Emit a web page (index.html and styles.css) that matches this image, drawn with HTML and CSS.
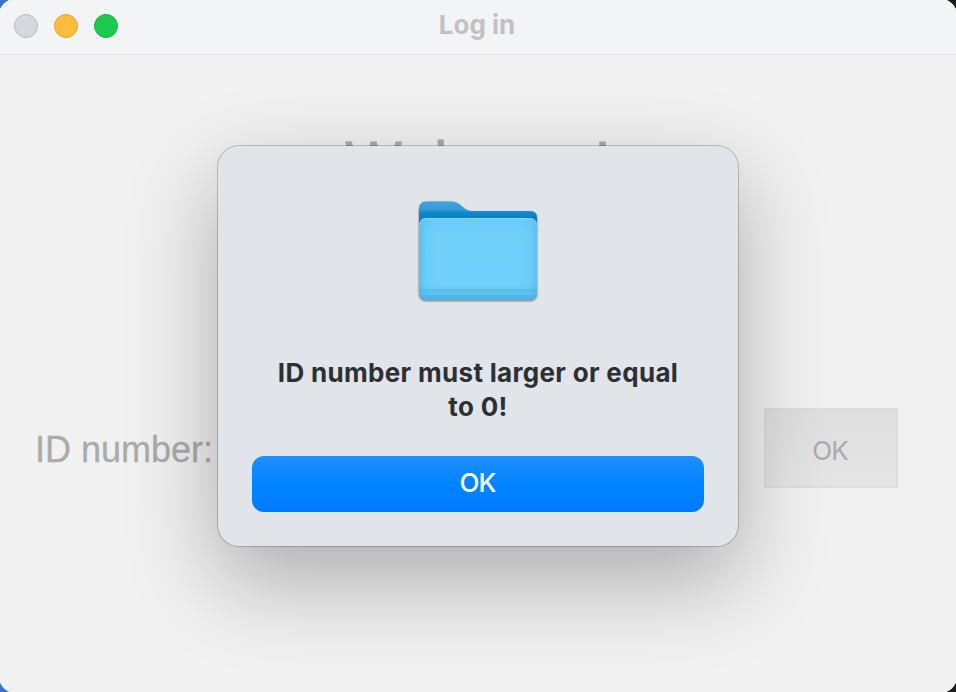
FILE: index.html
```
<!DOCTYPE html>
<html lang="en">
<head>
<meta charset="utf-8">
<title>Log in</title>
<link rel="stylesheet" href="styles.css">
</head>
<body>
<div class="window">
  <header class="titlebar">
    <div class="lights"><span class="light close"></span><span class="light minimize"></span><span class="light maximize"></span></div>
    <h1 class="title">Log in</h1>
  </header>
  <main class="content">
    <h2 class="welcome">Welcome!</h2>
    <div class="form">
      <label class="label">ID number:</label>
      <button class="submit" disabled>OK</button>
    </div>
  </main>
</div>
<div class="dialog" role="alertdialog">
  <svg class="folder" viewBox="0 0 128 108" width="128" height="108">
    <defs>
      <linearGradient id="back" x1="0" y1="0" x2="0" y2="1">
        <stop offset="0" stop-color="#43a4db"/><stop offset=".09" stop-color="#3498d3"/><stop offset=".13" stop-color="#0c86ca"/><stop offset=".22" stop-color="#087cc1"/><stop offset="1" stop-color="#087cc1"/>
      </linearGradient>
      <linearGradient id="front" x1="0" y1="0" x2="0" y2="1">
        <stop offset="0" stop-color="#6bcaf6"/><stop offset=".2" stop-color="#70d0fa"/><stop offset=".8" stop-color="#70d0fb"/><stop offset="1" stop-color="#5ec0ed"/>
      </linearGradient>
      <linearGradient id="edge">
        <stop offset="0" stop-color="#36a1d8" stop-opacity=".35"/><stop offset=".06" stop-color="#36a1d8" stop-opacity=".08"/><stop offset=".14" stop-color="#36a1d8" stop-opacity="0"/><stop offset=".86" stop-color="#36a1d8" stop-opacity="0"/><stop offset=".94" stop-color="#36a1d8" stop-opacity=".08"/><stop offset="1" stop-color="#36a1d8" stop-opacity=".35"/>
      </linearGradient>
    </defs>
    <path fill="url(#back)" d="M5 12Q5 3.500 12 3.500H38Q42 3.500 45 6L50 10Q53 13 58 13H116Q123 13 123 20V92H5Z"/>
    <path fill="url(#front)" d="M13 20H115Q123 20 123 28V94Q123 102 115 102H13Q5 102 5 94V28Q5 20 13 20Z"/>
    <path fill="url(#edge)" d="M13 20H115Q123 20 123 28V94Q123 102 115 102H13Q5 102 5 94V28Q5 20 13 20Z"/>
    <path d="M5.500 27Q6 20.500 13 20.500H115Q122 20.500 122.500 27" fill="none" stroke="#83d7fa"/>
    <path fill="#55b9e8" d="M5 91.500H123V93.500H5ZM5 94.500H123V95.500H5Z"/>
    <path fill="#4db5e8" d="M5.500 97H122.500Q121 102 115 102H13Q7 102 5.500 97Z"/>
  </svg>
  <p class="message">ID number must larger or equal<br>to 0!</p>
  <button class="confirm">OK</button>
</div>
</body>
</html>
```
FILE: styles.css
```
* { box-sizing: border-box; }
body {
  margin: 0;
  position: relative;
  width: 956px;
  height: 692px;
  overflow: hidden;
  background: linear-gradient(90deg, #3d72cc 50%, #1c1c1c 50%);
  font-family: Inter, "Liberation Sans", sans-serif;
}
.window {
  width: 960px;
  height: 696px;
  margin: -2px;
  overflow: hidden;
  border-radius: 20px;
  background: #f1f1f1;
}
.titlebar {
  display: grid;
  grid-template-columns: 1fr auto 1fr;
  align-items: center;
  height: 57px;
  padding: 0 18px 0 16px;
  border-bottom: 1px solid #e2e3e4;
  background: #f3f4f6;
}
.lights { display: flex; gap: 16px; }
.light { width: 24px; height: 24px; border: 1px solid #b8bbc0; border-radius: 50%; background: #d5d9de; }
.minimize { border-color: #e4a239; background: #ffbd3e; }
.maximize { border-color: #18b446; background: #1bc94e; }
.title { margin: 0; padding-bottom: 2px; color: #c1c1c1; font-size: 26px; line-height: 32px; font-weight: 700; letter-spacing: 0; }
.content { padding: 74px 60px 0 37px; font-family: "Liberation Sans", Arial, sans-serif; }
.welcome { margin: 0; color: #ababab; font-size: 60px; line-height: 68px; font-weight: 400; -webkit-text-stroke: 0.8px #ababab; text-align: center; padding-left: 23px; }
.form { display: flex; align-items: center; justify-content: space-between; margin-top: 211px; }
.label { color: #ababab; font-size: 36px; line-height: 42px; padding-top: 4px; -webkit-text-stroke: 0.3px #ababab; }
.submit {
  width: 134px;
  height: 80px;
  padding: 5px 2px 0 0;
  border: 2px solid #dedede;
  background: linear-gradient(#dfdfdf, #e5e5e5);
  color: #ababab;
  font: 26px Inter, sans-serif;
  letter-spacing: -1px;
}
.dialog {
  position: absolute;
  left: 218px;
  top: 146px;
  display: flex;
  flex-direction: column;
  align-items: center;
  width: 520px;
  height: 400px;
  padding: 52px 34px 34px;
  border-radius: 21px;
  background: #e1e4e9;
  box-shadow: 0 0 0 1px rgba(0, 0, 0, .2), 0 34px 88px 2px rgba(0, 0, 0, .28);
}
.folder { display: block; filter: drop-shadow(0 1px 1px rgba(0, 0, 0, .5)); }
.message { margin: 50px 0 0; color: #2c3035; font-size: 26px; line-height: 34px; font-weight: 700; text-align: center; letter-spacing: 0.32px; white-space: nowrap; }
.confirm {
  width: 452px;
  height: 56px;
  margin-top: auto;
  padding: 0 1px 3px 0;
  border: 0;
  border-radius: 12px;
  background: linear-gradient(#208fff, #0084ff 50%, #007aff);
  color: #fff;
  font: 500 26px Inter, sans-serif;
  letter-spacing: -1px;
}
```
